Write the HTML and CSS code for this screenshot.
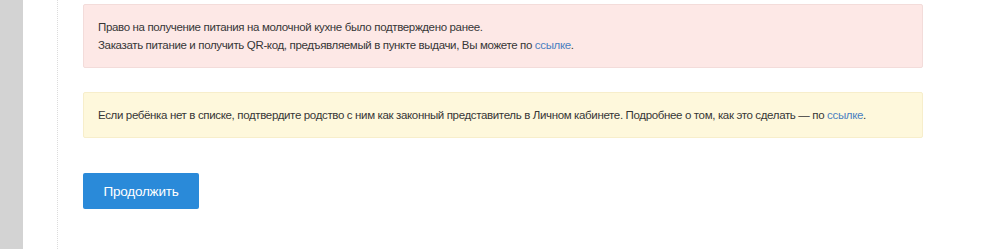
FILE: index.html
```html
<!DOCTYPE html>
<html lang="ru">
<head>
    <meta charset="UTF-8">
    <title>Молочная кухня</title>
    <link rel="stylesheet" href="styles.css">
</head>
<body>
    <div class="page">
        <div class="side"></div>
        <div class="main">
            <div class="content">

                <!--сообщения-->
                <div class="notice notice-error">
                    <p>Право на получение питания на молочной кухне было подтверждено ранее.</p>
                    <p>Заказать питание и получить QR-код, предъявляемый в пункте выдачи, Вы можете по <a href="#">ссылке</a>.</p>
                </div>

                <div class="notice notice-warn">
                    <p>Если ребёнка нет в списке, подтвердите родство с ним как законный представитель в Личном кабинете. Подробнее о том, как это сделать — по <a href="#">ссылке</a>.</p>
                </div>

                <button class="btn" type="button">Продолжить</button>
            </div>
        </div>
    </div>
</body>
</html>
```

FILE: styles.css
```css
*{
    padding: 0;
    margin: 0;
    box-sizing: border-box;
}
html,body{
    width: 100%;
    height: 100%;
}
body{
    font-family: "Liberation Sans",Arial,sans-serif;
    font-size: 11.5px;
    letter-spacing: -0.35px;
    color: #363636;
    background-color: #fff;
    overflow: hidden;
}
.page{
    display: flex;
    height: 100%;
}
.side{
    width: 23px;
    background-color: #d3d3d3;
}
.main{
    flex: 1;
    padding-left: 34px;
}
.content{
    height: 100%;
    border-left: 1px dotted #dcdcdc;
    padding: 4px 0 0 25px;
    width: 866px;
}
.notice{
    border: 1px solid;
    border-radius: 2px;
    padding: 13px 14px;
    line-height: 18px;
}
.notice a{
    color: #4a7fc1;
    text-decoration: none;
}
.notice-error{
    background-color: #fde8e6;
    border-color: #f3dcda;
}
.notice-warn{
    margin-top: 24px;
    background-color: #fef8dc;
    border-color: #f7eecb;
}
.btn{
    display: block;
    margin-top: 35px;
    width: 116px;
    height: 36px;
    border: none;
    border-radius: 2px;
    background-color: #2a8ad9;
    color: #fff;
    font-family: inherit;
    font-size: 13.5px;
    letter-spacing: -0.2px;
}
```
